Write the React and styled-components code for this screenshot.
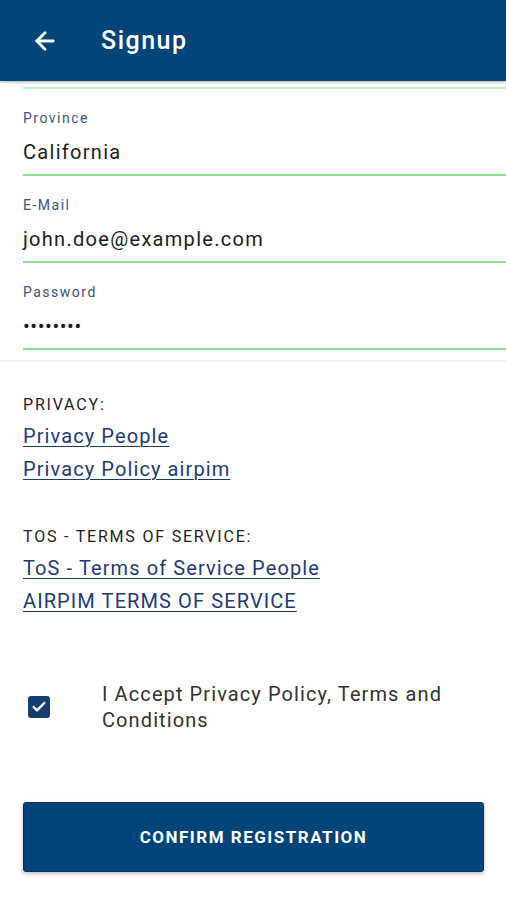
import React from "react";
import styled, { createGlobalStyle } from "styled-components";
import { ArrowLeft, Check } from "lucide-react";

const GlobalStyle = createGlobalStyle`
  body {
    margin: 0;
    background: #ffffff;
    font-family: Roboto, "Noto Sans", sans-serif;
  }
`;

const fields = [
  { label: "Province", value: "California" },
  { label: "E-Mail", value: "john.doe@example.com" },
  { label: "Password", value: "••••••••", secret: true },
];

const sections = [
  { title: "PRIVACY:", links: ["Privacy People", "Privacy Policy airpim"] },
  {
    title: "TOS - TERMS OF SERVICE:",
    links: ["ToS - Terms of Service People", "AIRPIM TERMS OF SERVICE"],
  },
];

export default function App() {
  return (
    <Page>
      <GlobalStyle />
      <Header>
        <BackButton aria-label="back">
          <ArrowLeft size={28} strokeWidth={2.4} />
        </BackButton>
        <Title>Signup</Title>
      </Header>

      <FormBlock>
        <ScrolledLine />
        {fields.map((f) => (
          <Field key={f.label}>
            <Label>{f.label}</Label>
            <Value $secret={f.secret}>{f.value}</Value>
          </Field>
        ))}
      </FormBlock>

      <Legal>
        {sections.map((s) => (
          <LegalSection key={s.title}>
            <SectionTitle>{s.title}</SectionTitle>
            {s.links.map((l) => (
              <LegalLink key={l} href="#">
                {l}
              </LegalLink>
            ))}
          </LegalSection>
        ))}
      </Legal>

      <AcceptRow>
        <CheckBox>
          <Check size={16} strokeWidth={3.5} />
        </CheckBox>
        <AcceptText>I Accept Privacy Policy, Terms and Conditions</AcceptText>
      </AcceptRow>

      <ConfirmButton>CONFIRM REGISTRATION</ConfirmButton>
    </Page>
  );
}

const Page = styled.div`
  width: 506px;
  min-height: 900px;
  background: #ffffff;
  overflow: hidden;
`;

const Header = styled.header`
  height: 81px;
  background: #01457a;
  display: flex;
  align-items: center;
  padding-left: 31px;
  box-shadow: 0 1px 3px rgba(0, 0, 0, 0.35);
  position: relative;
  z-index: 1;
`;

const BackButton = styled.button`
  background: none;
  border: 0;
  padding: 0;
  color: #ffffff;
  display: flex;
  align-items: center;
  margin-top: 1px;
`;

const Title = styled.h1`
  margin: 0 0 0 42px;
  color: #ffffff;
  font-size: 25px;
  font-weight: 500;
  letter-spacing: 1.5px;
`;

const FormBlock = styled.div`
  padding-left: 23px;
  padding-bottom: 10px;
  border-bottom: 2px solid #f0f0f0;
`;

const ScrolledLine = styled.div`
  margin-top: 6px;
  height: 2px;
  background: #c4ecc4;
`;

const Field = styled.div`
  padding-top: 20px;
  padding-bottom: 10px;
  border-bottom: 2px solid #8fdf93;
`;

const Label = styled.div`
  font-size: 14px;
  line-height: 18px;
  color: #3f5282;
  letter-spacing: 1.5px;
`;

const Value = styled.div`
  margin-top: 13px;
  font-size: 20px;
  line-height: 24px;
  color: #1c1c1c;
  letter-spacing: ${(p) => (p.$secret ? "0.6px" : "1.3px")};
`;

const Legal = styled.div`
  padding: 33px 23px 0;
  display: flex;
  flex-direction: column;
  gap: 41px;
`;

const LegalSection = styled.div`
  display: flex;
  flex-direction: column;
  align-items: flex-start;
`;

const SectionTitle = styled.div`
  font-size: 16px;
  line-height: 20px;
  color: #222222;
  letter-spacing: 1.8px;
  margin-bottom: 5px;
`;

const LegalLink = styled.a`
  font-size: 20px;
  line-height: 33px;
  color: #1e3b78;
  letter-spacing: 1.1px;
  text-decoration: underline;
  text-underline-offset: 3px;
  text-decoration-thickness: 1px;
`;

const AcceptRow = styled.div`
  margin-top: 63px;
  padding-left: 28px;
  padding-right: 30px;
  display: flex;
  align-items: center;
  gap: 52px;
`;

const CheckBox = styled.span`
  flex: none;
  width: 22px;
  height: 22px;
  border-radius: 3px;
  background: #153d6e;
  color: #ffffff;
  display: flex;
  align-items: center;
  justify-content: center;
`;

const AcceptText = styled.div`
  font-size: 20px;
  line-height: 26px;
  color: #333333;
  letter-spacing: 1.1px;
`;

const ConfirmButton = styled.button`
  display: block;
  margin: 69px 22px 0 23px;
  width: 461px;
  height: 70px;
  background: #01457a;
  border: 1px solid #0c2e6a;
  border-radius: 3px;
  box-shadow: 0 2px 4px rgba(0, 0, 0, 0.25);
  color: #ffffff;
  font-family: Roboto, "Noto Sans", sans-serif;
  font-size: 17px;
  font-weight: 700;
  letter-spacing: 1.5px;
`;
